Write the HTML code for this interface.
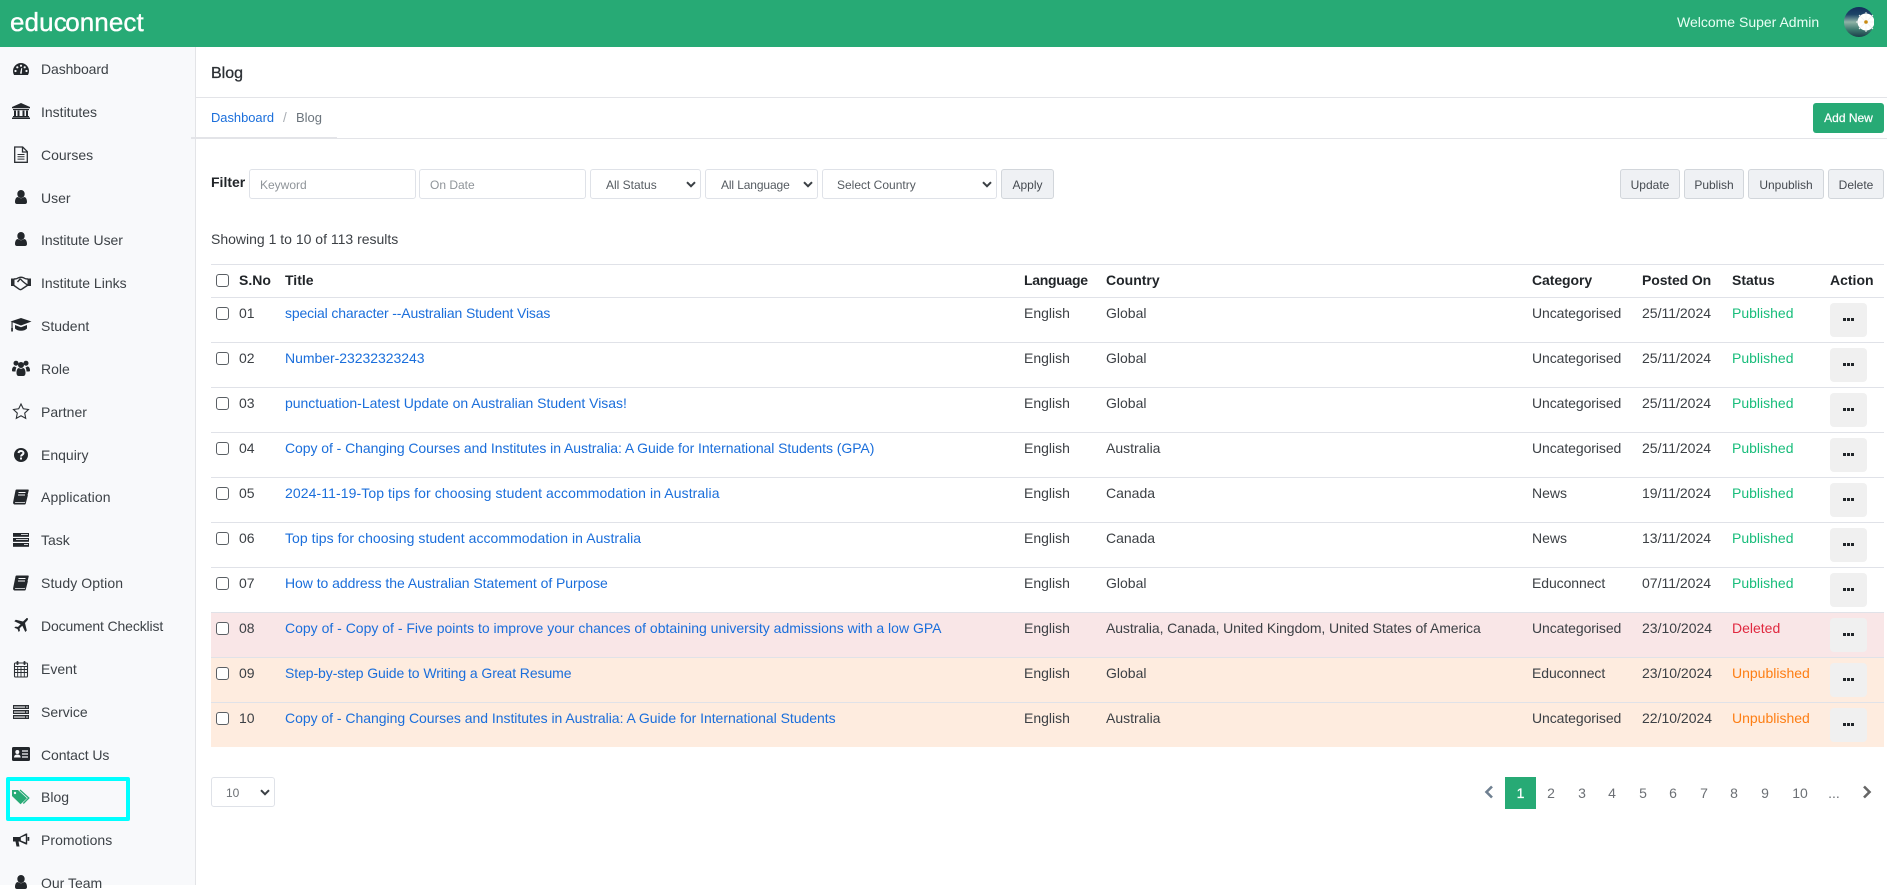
<!DOCTYPE html>
<html lang="en"><head><meta charset="utf-8"><title>Blog</title>
<style>
*{box-sizing:border-box}
html,body{margin:0;padding:0;width:1887px;height:885px;overflow:hidden;background:#fff;font-family:"Liberation Sans",sans-serif;font-size:14px;color:#3c4045}
.a{position:absolute;white-space:nowrap}
#top{left:0;top:0;width:1887px;height:47px;background:#27aa75}
#side{left:0;top:47px;width:196px;height:838px;background:#f8f9fb;border-right:1px solid #e3e4e7}
.n{position:absolute;left:41px;line-height:20px;white-space:nowrap;color:#3d4247}
.ic{position:absolute;left:10px;width:22px;height:18px;overflow:visible}
.ln{position:absolute;height:1px;background:#e3e4e8}
input,select{position:absolute;height:30px;top:169px;background:#fff;border:1px solid #dfe2e8;border-radius:3px;font:12px "Liberation Sans",sans-serif;color:#555b61;padding:2px 0 0 15px;appearance:none;-webkit-appearance:none;outline:0}
input{padding-left:10px}
input::placeholder{color:#8f9499;opacity:1}
.chev{position:absolute;width:10px;height:7px}
.b{position:absolute;top:169px;height:30px;background:#eff1f4;border:1px solid #d2d6db;border-radius:3px;font-size:12px;line-height:30px;text-align:center;color:#454a50}
.r{position:absolute;left:211px;width:1673px;height:45px;border-top:1px solid #e0e2e8}
.r span{position:absolute;top:5px;line-height:20px;white-space:nowrap}
.r b{position:absolute;top:5px;line-height:20px;white-space:nowrap;color:#212529;font-weight:700}
.cb{position:absolute;left:5px;top:9px;width:13px;height:13px;background:#fff;border:1px solid #5a5f64;border-radius:3px}
.s{left:28px}.t{left:74px;color:#1a6edb}.l{left:813px}.c{left:895px}.g{left:1321px;letter-spacing:-.08px}.d{left:1431px}.st{left:1521px}
.p{color:#18bd7b}.x{color:#e0283f}.u{color:#fd7e14}
.act{position:absolute;left:1619px;top:5px;width:37px;height:34px;background:#f0f0f0;border-radius:4px}
.act i{position:absolute;top:15px;width:3px;height:3px;background:#23272b}
.del{background:#f9e6e7}.unp{background:#feecdf}
.pg{position:absolute;top:777px;height:32px;line-height:32px;text-align:center;color:#6c7075;width:30px}
</style></head><body>

<div class="a" id="top"></div>
<div class="a" style="left:10px;top:5px;font-size:26px;line-height:34px;color:#fff;letter-spacing:.1px;-webkit-text-stroke:.35px #fff">edu<span style="letter-spacing:-1.500px">c</span>onnect</div>
<div class="a" style="left:1677px;top:13px;font-size:14px;line-height:18px;color:#e9fff5">Welcome Super Admin</div>
<svg class="a" style="left:1844px;top:7px" width="30" height="30" viewBox="0 0 30 30">
<defs><linearGradient id="av" x1="0" y1="0" x2="0" y2="1"><stop offset="0" stop-color="#12305c"/><stop offset=".25" stop-color="#1d4468"/><stop offset=".5" stop-color="#8fb3a6"/><stop offset=".75" stop-color="#3f7a70"/><stop offset="1" stop-color="#1c3d4a"/></linearGradient></defs>
<circle cx="15" cy="15" r="15" fill="url(#av)"/>
<circle cx="22" cy="15" r="8.500" fill="#fff"/>
<g stroke="#f4f4f4" stroke-width="1"><path d="M22 5V25M12 15H30M15 8l14 14M29 8L15 22"/></g>
<circle cx="22" cy="15" r="1.800" fill="#c98a10"/>
</svg>

<div class="a" id="side"></div>
<div class="n" style="top:59px;letter-spacing:-.1px">Dashboard</div>
<div class="n" style="top:102px">Institutes</div>
<div class="n" style="top:145px">Courses</div>
<div class="n" style="top:188px">User</div>
<div class="n" style="top:230px;letter-spacing:-.04px">Institute User</div>
<div class="n" style="top:273px">Institute Links</div>
<div class="n" style="top:316px">Student</div>
<div class="n" style="top:359px">Role</div>
<div class="n" style="top:402px">Partner</div>
<div class="n" style="top:445px">Enquiry</div>
<div class="n" style="top:487px;letter-spacing:.1px">Application</div>
<div class="n" style="top:530px">Task</div>
<div class="n" style="top:573px;letter-spacing:.1px">Study Option</div>
<div class="n" style="top:616px;letter-spacing:-.13px">Document Checklist</div>
<div class="n" style="top:659px">Event</div>
<div class="n" style="top:702px">Service</div>
<div class="n" style="top:745px;letter-spacing:-.1px">Contact Us</div>
<div class="n" style="top:787px">Blog</div>
<div class="n" style="top:830px;letter-spacing:.05px">Promotions</div>
<div class="n" style="top:873px">Our Team</div>

<!-- sidebar icons -->
<svg class="ic" style="top:60px" viewBox="0 0 22 18"><path fill="#23272b" d="M3 11a8 8 0 0 1 16 0c0 1.500-.4 2.800-1.100 4H4.100C3.400 13.800 3 12.500 3 11z"/><g fill="#f8f9fb"><circle cx="5.500" cy="11" r="1.100"/><circle cx="7.300" cy="7.300" r="1.100"/><circle cx="11" cy="5.700" r="1.100"/><circle cx="14.700" cy="7.300" r="1.100"/><circle cx="16.500" cy="11" r="1.100"/><path d="M10 13.500l1.300-5.500.9.200-.5 5.600z"/></g></svg>
<svg class="ic" style="top:103px" viewBox="0 0 22 18" fill="#23272b"><path d="M11 0l9 4v1.300H2V4z"/><rect x="3" y="6" width="16" height="1.200"/><rect x="4" y="7.500" width="2" height="5.500"/><rect x="7.500" y="7.500" width="2" height="5.500"/><rect x="12.500" y="7.500" width="2" height="5.500"/><rect x="16" y="7.500" width="2" height="5.500"/><rect x="3" y="13" width="16" height="1.200"/><rect x="2" y="14.500" width="18" height="1.500"/></svg>
<svg class="ic" style="top:146px" viewBox="0 0 22 18" fill="none" stroke="#2b2f33" stroke-width="1.300"><path d="M4.700 1h8l4.600 4.600v10.700H4.700zM12.500 1v5h5"/><path stroke-width="1" d="M7.500 8.500h7M7.500 10.800h7M7.500 13.100h7"/></svg>
<svg class="ic" style="top:189px" viewBox="0 0 22 18" fill="#23272b"><ellipse cx="11" cy="5" rx="3.700" ry="4"/><path d="M5 13c0-3 1.200-5 3-5 1 .8 2 1.200 3 1.200s2-.4 3-1.200c1.800 0 3 2 3 5 0 1.300-.8 2-2 2H7c-1.200 0-2-.7-2-2z"/></svg>
<svg class="ic" style="top:231px" viewBox="0 0 22 18" fill="#23272b"><ellipse cx="11" cy="5" rx="3.700" ry="4"/><path d="M5 13c0-3 1.200-5 3-5 1 .8 2 1.200 3 1.200s2-.4 3-1.200c1.800 0 3 2 3 5 0 1.300-.8 2-2 2H7c-1.200 0-2-.7-2-2z"/></svg>
<svg class="ic" style="top:274px" viewBox="0 0 22 18"><path fill="none" stroke="#2b2f33" stroke-width="1.400" d="M4 5c2 0 3-.2 4-1 2-1 4-1 6 0 1 .8 2 1 4 1M4 11.500l5 3.500c1 .8 2 .8 3 0l6-4M7.500 8l3-3.500M10.500 5c2 2.500 4 4 7 6"/><path fill="#2b2f33" d="M1 4.500h3.500v7.500H1zM17.500 4.500H21v7.500h-3.500z"/></svg>
<svg class="ic" style="top:317px" viewBox="0 0 22 18" fill="#23272b"><path d="M11 1l10.500 3.500L11 8.500.5 4.500z"/><path d="M5 8l6 2.200L17 8v3.500c-1.500 1.500-3.500 2.300-6 2.300s-4.500-.8-6-2.300z"/><rect x="1.500" y="5" width="1.100" height="6.500"/><rect x="1.200" y="11" width="1.700" height="3.500"/></svg>
<svg class="ic" style="top:360px" viewBox="0 0 22 18" fill="#23272b"><circle cx="6" cy="3.200" r="2.500"/><circle cx="16" cy="3.200" r="2.500"/><circle cx="11" cy="5" r="3"/><path d="M2 10.500C2 8 3 6.500 4.500 6.500c.5 0 1 .8 2 1-.4.800-1 2-1 4H3c-.6 0-1-.4-1-1zM20 10.500c0-2.500-1-4-2.500-4-.5 0-1 .8-2 1 .4.800 1 2 1 4H19c.6 0 1-.4 1-1zM6.500 13c0-3 1-5 2.500-5 .7.500 1.300.8 2 .8s1.300-.3 2-.8c1.500 0 2.500 2 2.500 5 0 1.500-.8 3-2 3H8.500c-1.200 0-2-1.500-2-3z"/></svg>
<svg class="ic" style="top:403px" viewBox="0 0 22 18"><path fill="none" stroke="#2b2f33" stroke-width="1.100" d="M11 1l2.300 4.800 5.200.7-3.800 3.600 1 5.200-4.700-2.500-4.700 2.500 1-5.200-3.800-3.600 5.200-.7z"/></svg>
<svg class="ic" style="top:446px" viewBox="0 0 22 18"><circle cx="11" cy="9" r="7" fill="#23272b"/><path fill="none" stroke="#f8f9fb" stroke-width="2" d="M8.500 7c.2-1.500 1.200-2 2.500-2 1.500 0 2.500.9 2.500 2 0 1.800-2.500 1.700-2.500 3.500"/><rect x="10" y="11.500" width="2" height="2" fill="#f8f9fb"/></svg>
<svg class="ic" style="top:488px" viewBox="0 0 22 18"><path fill="#23272b" d="M6.500 1.500H18c.6 0 .9.400.7 1L16.200 12.500c-.3 1-1 1.500-2 1.500H5.500c-.6 0-.7.400-.4.800H15l2-8 .9.500-2.200 8.500c-.1.500-.5.700-1 .700H5c-1.500 0-2.200-1.300-1.800-2.800L5.500 2.500c.1-.6.500-1 1-1z"/><path stroke="#f8f9fb" stroke-width="1" d="M8.500 4.500h7M8 7h7"/></svg>
<svg class="ic" style="top:531px" viewBox="0 0 22 18" fill="#23272b"><rect x="3" y="2" width="16" height="3.800"/><rect x="3" y="7" width="16" height="3.800"/><rect x="3" y="12" width="16" height="3.800"/><rect x="11" y="3" width="7" height=".8" fill="#f8f9fb"/><rect x="6" y="8" width="12" height=".8" fill="#f8f9fb"/><rect x="14" y="13" width="4" height=".8" fill="#f8f9fb"/></svg>
<svg class="ic" style="top:574px" viewBox="0 0 22 18"><path fill="#23272b" d="M6.500 1.500H18c.6 0 .9.400.7 1L16.200 12.500c-.3 1-1 1.500-2 1.500H5.500c-.6 0-.7.400-.4.800H15l2-8 .9.500-2.200 8.500c-.1.500-.5.700-1 .700H5c-1.500 0-2.200-1.300-1.800-2.800L5.500 2.500c.1-.6.500-1 1-1z"/><path stroke="#f8f9fb" stroke-width="1" d="M8.500 4.500h7M8 7h7"/></svg>
<svg class="ic" style="top:617px" viewBox="0 0 22 18"><path fill="#23272b" d="M17 1c1 0 1.200 1 .7 2L15 6l1.800 7.500-1.500 1.500-3-6.300-2.700 2.600.3 2.500-1.200 1.200L7.500 12 4.300 10.800l1.200-1.200 2.500.3 2.600-2.700L4.300 4.200l1.500-1.500L13 4.500l3-2.800c.3-.4.600-.7 1-.7z"/></svg>
<svg class="ic" style="top:660px" viewBox="0 0 22 18"><rect x="4.500" y="3" width="13" height="14" rx="1" fill="none" stroke="#2b2f33" stroke-width="1.100"/><path stroke="#2b2f33" stroke-width=".9" d="M4 6.500h14M4 9.500h14M4 12.500h14M7.700 6.500v10M11 6.500v10M14.300 6.500v10"/><rect x="6.500" y="1" width="2" height="4" rx="1" fill="#2b2f33"/><rect x="13.500" y="1" width="2" height="4" rx="1" fill="#2b2f33"/></svg>
<svg class="ic" style="top:703px" viewBox="0 0 22 18"><g fill="#2b2f33"><path d="M3 2h16v4H3zM3 7h16v4H3zM3 12h16v4H3z"/></g><g fill="#f8f9fb"><rect x="4" y="3.500" width="11" height="1.100"/><rect x="4" y="8.500" width="11" height="1.100"/><rect x="4" y="13.500" width="11" height="1.100"/><circle cx="17" cy="4" r=".8"/><circle cx="17" cy="9" r=".8"/><circle cx="17" cy="14" r=".8"/></g></svg>
<svg class="ic" style="top:746px" viewBox="0 0 22 18"><rect x="2" y="1" width="18" height="14" rx="1.500" fill="#23272b"/><circle cx="7.300" cy="6" r="2" fill="#f8f9fb"/><path fill="#f8f9fb" d="M4 11.500c0-2 1.300-3 3.300-3s3.300 1 3.300 3z"/><path stroke="#f8f9fb" stroke-width="1.300" d="M12 5h6M12 8h6M12 11h6"/></svg>
<svg class="ic" style="top:788px" viewBox="0 0 22 18"><path fill="#27aa75" d="M2 2h6l9 8.300-6.500 6L2 8z"/><path fill="none" stroke="#27aa75" stroke-width="1.300" d="M10 2l8.800 8-5.500 5.500"/><circle cx="5" cy="5" r="1.200" fill="#f8f9fb"/></svg>
<svg class="ic" style="top:831px" viewBox="0 0 22 18"><path fill="#23272b" d="M3 6h6.500L16 2.500h1.200v11H16L9.500 10.500H8.500l1 5h-3L5.500 10.500H3z"/><path fill="#f8f9fb" d="M15.800 4.500V11.500L10.800 9.500V6.500z"/><rect x="17.500" y="6" width="1.800" height="3.800" fill="#23272b"/></svg>
<svg class="ic" style="top:874px" viewBox="0 0 22 18" fill="#23272b"><ellipse cx="11" cy="5" rx="3.700" ry="4"/><path d="M5 13c0-3 1.200-5 3-5 1 .8 2 1.200 3 1.200s2-.4 3-1.200c1.800 0 3 2 3 5 0 1.300-.8 2-2 2H7c-1.200 0-2-.7-2-2z"/></svg>

<div class="a" style="left:6px;top:777px;width:124px;height:44px;border:4px solid #00ffff;border-radius:2px"></div>

<!-- page heading -->
<div class="a" style="left:211px;top:63px;font-size:16px;line-height:22px;color:#2c3035;-webkit-text-stroke:.3px #2c3035">Blog</div>
<div class="ln" style="left:196px;top:97px;width:1691px"></div>
<div class="a" style="left:211px;top:108px;line-height:20px;font-size:12.900px;color:#1a6edb">Dashboard</div>
<div class="a" style="left:283px;top:108px;line-height:20px;font-size:13.500px;color:#a8adb3">/</div>
<div class="a" style="left:296px;top:108px;line-height:20px;font-size:13px;color:#6c757d">Blog</div>
<div class="ln" style="left:191px;top:138px;width:1696px"></div>
<div class="ln" style="left:191px;top:137px;width:146px"></div>
<div class="a" style="left:1813px;top:103px;width:71px;height:30px;background:#27aa75;border-radius:3px;color:#fff;font-size:12px;line-height:31px;text-align:center;-webkit-text-stroke:.2px #fff">Add New</div>

<!-- filters -->
<div class="a" style="left:211px;top:172px;line-height:20px;font-weight:700;color:#212529;font-size:14px">Filter</div>
<input style="left:249px;width:167px" placeholder="Keyword">
<input style="left:419px;width:167px" placeholder="On Date">
<select style="left:590px;width:111px"><option>All Status</option></select>
<select style="left:705px;width:113px;letter-spacing:-.12px"><option>All Language</option></select>
<select style="left:822px;width:175px;padding-left:14px"><option>Select Country</option></select>
<svg class="chev" style="left:686px;top:181px" viewBox="0 0 10 7"><path d="M1 1.200l4 4 4-4" fill="none" stroke="#3a3f44" stroke-width="2"/></svg>
<svg class="chev" style="left:803px;top:181px" viewBox="0 0 10 7"><path d="M1 1.200l4 4 4-4" fill="none" stroke="#3a3f44" stroke-width="2"/></svg>
<svg class="chev" style="left:982px;top:181px" viewBox="0 0 10 7"><path d="M1 1.200l4 4 4-4" fill="none" stroke="#3a3f44" stroke-width="2"/></svg>
<div class="b" style="left:1001px;width:53px">Apply</div>
<div class="b" style="left:1620px;width:60px">Update</div>
<div class="b" style="left:1684px;width:60px">Publish</div>
<div class="b" style="left:1748px;width:76px">Unpublish</div>
<div class="b" style="left:1828px;width:56px">Delete</div>

<div class="a" style="left:211px;top:229px;line-height:20px">Showing 1 to 10 of 113 results</div>

<!-- table -->
<div class="r" style="top:264px"><i class="cb"></i><b class="s">S.No</b><b style="left:74px">Title</b><b class="l" style="letter-spacing:-.3px">Language</b><b class="c">Country</b><b class="g">Category</b><b class="d" style="letter-spacing:-.1px">Posted On</b><b class="st">Status</b><b style="left:1619px">Action</b></div>

<div class="r" style="top:297px"><i class="cb"></i><span class="s">01</span><span class="t" style="letter-spacing:-.137px">special character --Australian Student Visas</span><span class="l">English</span><span class="c">Global</span><span class="g">Uncategorised</span><span class="d">25/11/2024</span><span class="st p">Published</span><div class="act"><i style="left:13px"></i><i style="left:17px"></i><i style="left:21px"></i></div></div>
<div class="r" style="top:342px"><i class="cb"></i><span class="s">02</span><span class="t" style="letter-spacing:-.03px">Number-23232323243</span><span class="l">English</span><span class="c">Global</span><span class="g">Uncategorised</span><span class="d">25/11/2024</span><span class="st p">Published</span><div class="act"><i style="left:13px"></i><i style="left:17px"></i><i style="left:21px"></i></div></div>
<div class="r" style="top:387px"><i class="cb"></i><span class="s">03</span><span class="t" style="letter-spacing:-.02px">punctuation-Latest Update on Australian Student Visas!</span><span class="l">English</span><span class="c">Global</span><span class="g">Uncategorised</span><span class="d">25/11/2024</span><span class="st p">Published</span><div class="act"><i style="left:13px"></i><i style="left:17px"></i><i style="left:21px"></i></div></div>
<div class="r" style="top:432px"><i class="cb"></i><span class="s">04</span><span class="t" style="letter-spacing:-.06px">Copy of - Changing Courses and Institutes in Australia: A Guide for International Students (GPA)</span><span class="l">English</span><span class="c">Australia</span><span class="g">Uncategorised</span><span class="d">25/11/2024</span><span class="st p">Published</span><div class="act"><i style="left:13px"></i><i style="left:17px"></i><i style="left:21px"></i></div></div>
<div class="r" style="top:477px"><i class="cb"></i><span class="s">05</span><span class="t" style="letter-spacing:.09px">2024-11-19-Top tips for choosing student accommodation in Australia</span><span class="l">English</span><span class="c">Canada</span><span class="g" style="letter-spacing:0">News</span><span class="d">19/11/2024</span><span class="st p">Published</span><div class="act"><i style="left:13px"></i><i style="left:17px"></i><i style="left:21px"></i></div></div>
<div class="r" style="top:522px"><i class="cb"></i><span class="s">06</span><span class="t" style="letter-spacing:.05px">Top tips for choosing student accommodation in Australia</span><span class="l">English</span><span class="c">Canada</span><span class="g" style="letter-spacing:0">News</span><span class="d">13/11/2024</span><span class="st p">Published</span><div class="act"><i style="left:13px"></i><i style="left:17px"></i><i style="left:21px"></i></div></div>
<div class="r" style="top:567px"><i class="cb"></i><span class="s">07</span><span class="t" style="letter-spacing:-.05px">How to address the Australian Statement of Purpose</span><span class="l">English</span><span class="c">Global</span><span class="g">Educonnect</span><span class="d">07/11/2024</span><span class="st p">Published</span><div class="act"><i style="left:13px"></i><i style="left:17px"></i><i style="left:21px"></i></div></div>
<div class="r del" style="top:612px"><i class="cb"></i><span class="s">08</span><span class="t">Copy of - Copy of - Five points to improve your chances of obtaining university admissions with a low GPA</span><span class="l">English</span><span class="c" style="letter-spacing:-.1px">Australia, Canada, United Kingdom, United States of America</span><span class="g">Uncategorised</span><span class="d">23/10/2024</span><span class="st x">Deleted</span><div class="act"><i style="left:13px"></i><i style="left:17px"></i><i style="left:21px"></i></div></div>
<div class="r unp" style="top:657px"><i class="cb"></i><span class="s">09</span><span class="t" style="letter-spacing:-.08px">Step-by-step Guide to Writing a Great Resume</span><span class="l">English</span><span class="c">Global</span><span class="g">Educonnect</span><span class="d">23/10/2024</span><span class="st u">Unpublished</span><div class="act"><i style="left:13px"></i><i style="left:17px"></i><i style="left:21px"></i></div></div>
<div class="r unp" style="top:702px"><i class="cb"></i><span class="s">10</span><span class="t" style="letter-spacing:-.03px">Copy of - Changing Courses and Institutes in Australia: A Guide for International Students</span><span class="l">English</span><span class="c">Australia</span><span class="g">Uncategorised</span><span class="d">22/10/2024</span><span class="st u">Unpublished</span><div class="act"><i style="left:13px"></i><i style="left:17px"></i><i style="left:21px"></i></div></div>

<!-- per page -->
<select style="left:211px;top:777px;width:64px;font-size:12px;color:#6c7075;padding-left:14px"><option>10</option></select>
<svg class="chev" style="left:260px;top:789px" viewBox="0 0 10 7"><path d="M1 1.200l4 4 4-4" fill="none" stroke="#3a3f44" stroke-width="2"/></svg>

<!-- pagination -->
<svg class="a" style="left:1484px;top:785px" width="10" height="14" viewBox="0 0 10 14"><path d="M8 1.500L2.500 7 8 12.500" fill="none" stroke="#6f8091" stroke-width="2.600"/></svg>
<div class="a" style="left:1505px;top:777px;width:31px;height:32px;background:#27aa75"></div>
<div class="pg" style="left:1505px;width:31px;color:#fff;-webkit-text-stroke:.3px #fff">1</div>
<div class="pg" style="left:1536px">2</div>
<div class="pg" style="left:1567px">3</div>
<div class="pg" style="left:1597px">4</div>
<div class="pg" style="left:1628px">5</div>
<div class="pg" style="left:1658px">6</div>
<div class="pg" style="left:1689px">7</div>
<div class="pg" style="left:1719px">8</div>
<div class="pg" style="left:1750px">9</div>
<div class="pg" style="left:1785px">10</div>
<div class="pg" style="left:1819px">...</div>
<svg class="a" style="left:1862px;top:785px" width="10" height="14" viewBox="0 0 10 14"><path d="M2 1.500L7.500 7 2 12.500" fill="none" stroke="#666" stroke-width="2.600"/></svg>

</body></html>
